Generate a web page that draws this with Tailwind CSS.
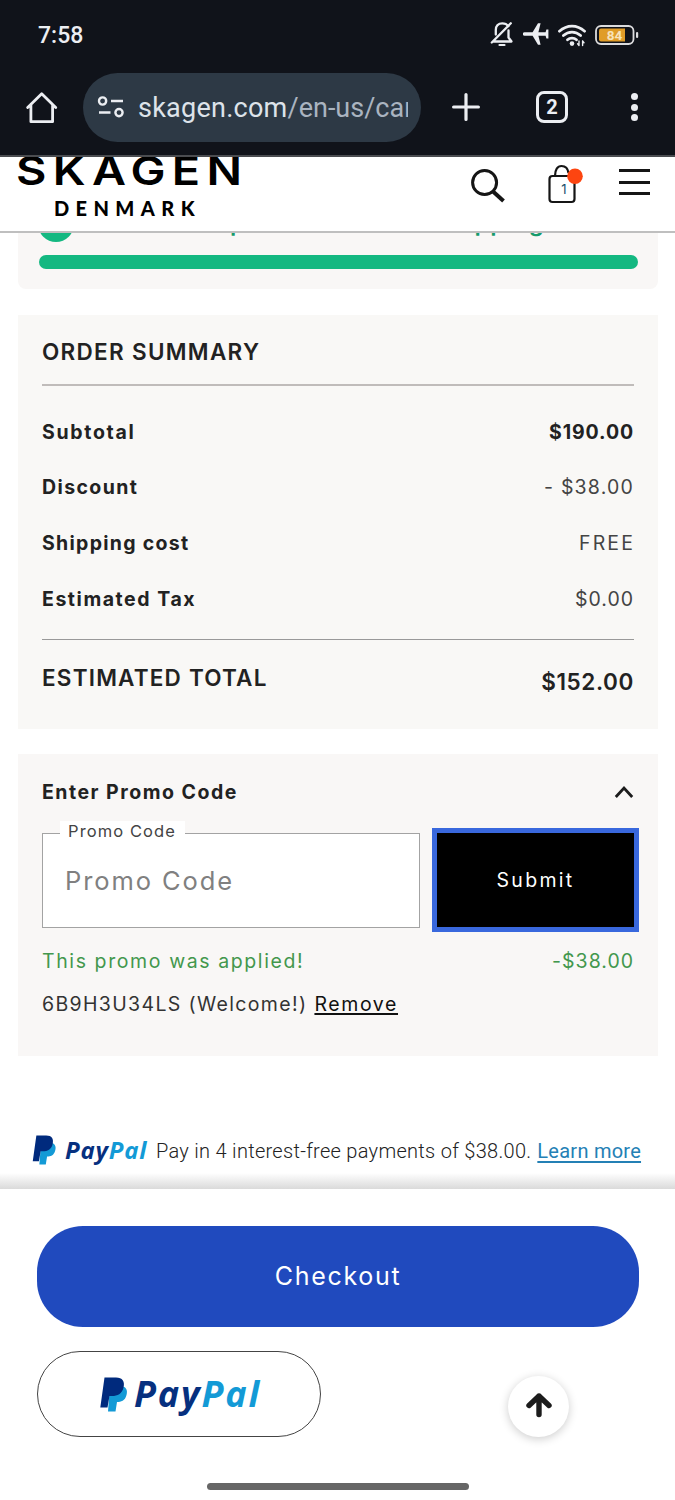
<!DOCTYPE html>
<html lang="en">
<head>
<meta charset="utf-8">
<title>Skagen Cart</title>
<script src="https://cdn.jsdelivr.net/npm/@tailwindcss/browser@4"></script>
</head>
<body class="w-[675px] h-[1500px] overflow-hidden bg-white font-['Inter',sans-serif] text-[#222] flex flex-col whitespace-nowrap">

<!-- Status bar -->
<div class="h-[72px] shrink-0 bg-[#10131a] flex items-center justify-between pl-[38px] pr-[36px] pb-[2px] text-[#eceef2]">
  <span class="font-['Roboto',sans-serif] font-medium text-[23px] leading-none">7:58</span>
  <div class="flex items-center gap-[9px]">
    <svg class="w-[24px] h-[26px] -mt-[2px]" viewBox="0 0 24 26" fill="none" stroke="currentColor" stroke-width="2.300" stroke-linecap="round" stroke-linejoin="round"><path d="M18.500 5.200C17 3.300 15 2.300 12.300 2.300C8.300 2.300 5.800 5 5.800 9V13.500M3.200 20.500H21.500L18.500 16.500V9.500M1.800 21.500L20.800 2.200"/><path d="M9.500 24H14.500" stroke-width="2.200"/></svg>
    <svg class="w-[26px] h-[24px] -mt-[2px]" viewBox="0 0 26 24" fill="currentColor"><path d="M1.500 10.300H9.600L15 1.200H17.600L15.400 10.300H22.600L23.400 7.400H25.400V16.600H23.400L22.600 13.700H15.400L17.600 22.800H15L9.600 13.700H1.500A1.700 1.700 0 0 1 1.500 10.300Z"/></svg>
    <svg class="w-[28px] h-[23px]" viewBox="0 0 28 23" fill="none" stroke="currentColor" stroke-width="2.700" stroke-linecap="round"><path d="M1.400 7.200C9 .3 19 .3 26.600 7.200M5.400 11.600C10.500 6.900 17.500 6.900 22.600 11.600M9.500 15.800C12 13.500 16 13.500 18.500 15.800"/><circle cx="14" cy="19.600" r="2.300" fill="currentColor" stroke="none"/><path d="M21 17V21.500M19.600 19.800L21 21.500M24.600 21.500V17M26 18.700L24.600 17" stroke-width="1.400"/></svg>
    <svg class="w-[44px] h-[20px] -mt-px" viewBox="0 0 44 20"><rect x="1" y="1" width="37.500" height="18" rx="5" fill="none" stroke="#dcdcde" stroke-width="1.800"/><path d="M6 3.500H30V16.500H6Q4 16.500 4 14.500V5.500Q4 3.500 6 3.500Z" fill="#e09c28"/><rect x="41" y="7" width="2.200" height="6" rx="1.100" fill="#dcdcde"/><text x="19.500" y="14.800" text-anchor="middle" font-family="Roboto" font-weight="700" font-size="13.500" fill="#f7e3bc">84</text></svg>
  </div>
</div>

<!-- Browser toolbar -->
<div class="h-[85px] shrink-0 bg-[#10131a] border-b-2 border-[#4a4c50] flex items-start text-[#eceef2]">
  <svg class="w-[32px] h-[32px] ml-[26px] mt-[20px]" viewBox="0 0 32 32" fill="none" stroke="currentColor" stroke-width="2.800" stroke-linejoin="round" stroke-linecap="round"><path d="M1.700 15.500L15.700 1.700L29.700 15.500M4.900 13V29.700H26.600V13"/></svg>
  <div class="ml-[25px] mt-px w-[338px] h-[69px] rounded-full bg-[#2d3945] flex items-center pl-[14px]">
    <svg class="w-[28px] h-[22px] -mt-px" viewBox="0 0 28 22" fill="none" stroke="currentColor" stroke-width="2.400"><circle cx="5.600" cy="5" r="3.600"/><path d="M14 5H26M2 16.500H13.500"/><circle cx="22" cy="16.600" r="3.600"/></svg>
    <div class="ml-[13px] w-[270px] overflow-hidden font-['Roboto',sans-serif] text-[27px] leading-[40px] text-[#dde3ea]"><span class="tracking-[0.25px]">skagen.com</span><span class="text-[#aab4c0]">/en-us/car</span></div>
  </div>
  <svg class="w-[28px] h-[28px] ml-[31px] mt-[21px]" viewBox="0 0 28 28" stroke="currentColor" stroke-width="3.200" stroke-linecap="round"><path d="M14 1.600V26.400M1.600 14H26.400"/></svg>
  <div class="ml-[56px] mt-[19px] w-[32px] h-[32px] rounded-[8px] border-[3px] border-current flex items-center justify-center font-['Roboto',sans-serif] font-bold text-[20px] leading-none">2</div>
  <div class="ml-[63px] mt-[21px] flex flex-col gap-[3.500px]">
    <i class="block w-[7px] h-[7px] rounded-full bg-current"></i><i class="block w-[7px] h-[7px] rounded-full bg-current"></i><i class="block w-[7px] h-[7px] rounded-full bg-current"></i>
  </div>
</div>

<!-- Site header -->
<header class="h-[76px] shrink-0 border-b-2 border-[#bfbfbf] flex items-start overflow-hidden text-black">
  <div class="w-[255px] flex flex-col items-start">
    <span class="ml-[16px] h-[30px] leading-[30px] -mt-px text-[40px] font-semibold tracking-[5.4px] origin-left scale-x-117">SKAGEN</span>
    <span class="ml-[54px] mt-[10px] leading-[24px] text-[20px] tracking-[6.4px] font-black font-['Lato',sans-serif]">DENMARK</span>
  </div>
  <svg class="w-[36px] h-[36px] ml-[215px] mt-[11px]" viewBox="0 0 36 36" fill="none" stroke="#151515"><circle cx="14.600" cy="14.500" r="12" stroke-width="3"/><path d="M22.500 23L33.500 33" stroke-width="4"/></svg>
  <svg class="w-[38px] h-[40px] ml-[41px] mt-[7px]" viewBox="0 0 38 40" fill="none"><rect x="2.500" y="12" width="25" height="26" rx="3" stroke="#151515" stroke-width="2.200"/><path d="M8 12C8 5.500 10.500 2 14.500 2S21 5 21.500 9" stroke="#151515" stroke-width="2.200"/><circle cx="28" cy="12.300" r="7.800" fill="#fd4510"/><text x="16.800" y="29.500" text-anchor="middle" font-family="Inter" font-size="13" fill="#17506c">1</text></svg>
  <div class="ml-[34px] mt-[12px] w-[31px] h-[26px] flex flex-col justify-between">
    <i class="block h-[3px] bg-[#151515]"></i><i class="block h-[3px] bg-[#151515]"></i><i class="block h-[3px] bg-[#151515]"></i>
  </div>
</header>

<!-- Shipping progress -->
<section class="ml-[18px] mr-[17px] h-[56px] shrink-0 bg-[#f9f7f6] rounded-b-[8px] pl-[21px] pr-[20px] overflow-hidden">
  <div class="h-[22px] flex items-start text-[24px] leading-none font-semibold text-[#169b6c]">
    <i class="block w-[36px] h-[36px] -mt-[27px] -ml-px rounded-full bg-[#14b881]"></i>
    <span class="-mt-[22px] ml-[156px]">p</span>
    <span class="-mt-[22px] ml-[193px] tracking-[0.8px]">shipping</span>
  </div>
  <div class="h-[14px] rounded-full bg-[#14b881]"></div>
</section>

<!-- Order summary -->
<section class="ml-[18px] mr-[17px] mt-[26px] h-[414px] shrink-0 bg-[#f9f8f6] px-[24px] text-[19.500px] leading-[24px]">
  <h2 class="h-[71px] pt-[25px] border-b-2 border-[#c0bcba] text-[22.500px] font-semibold tracking-[1.3px]">ORDER SUMMARY</h2>
  <div class="h-[254px] border-b border-[#999] pt-[33.500px] flex flex-col gap-[31.700px]">
    <div class="flex justify-between font-bold"><span class="tracking-[1.7px]">Subtotal</span><span class="tracking-[0.9px]">$190.00</span></div>
    <div class="flex justify-between"><b class="tracking-[1.4px]">Discount</b><span class="tracking-[1.2px] text-[#444]">- $38.00</span></div>
    <div class="flex justify-between"><b class="tracking-[1.3px]">Shipping cost</b><span class="tracking-[2.1px] -mr-px text-[#444]">FREE</span></div>
    <div class="flex justify-between"><b class="tracking-[1.55px]">Estimated Tax</b><span class="tracking-[1px] text-[#444]">$0.00</span></div>
  </div>
  <div class="flex justify-between pt-[26px] text-[22.500px] font-semibold"><span class="tracking-[1.2px]">ESTIMATED TOTAL</span><span class="mt-[4px] tracking-[0.6px]">$152.00</span></div>
</section>

<!-- Promo code -->
<section class="ml-[18px] mr-[17px] mt-[25px] h-[302px] shrink-0 bg-[#f9f7f6] px-[24px] text-[19.500px] leading-[24px]">
  <div class="flex justify-between items-center pt-[26px]">
    <span class="font-bold tracking-[1.5px]">Enter Promo Code</span>
    <svg class="w-[20px] h-[14px]" viewBox="0 0 20 14" fill="none" stroke="#1c1c1c" stroke-width="2.800"><path d="M1.800 12L10 3L18.200 12"/></svg>
  </div>
  <div class="flex mt-[24px]">
    <div class="relative mt-[5px] w-[378px] h-[95px] border border-[#a3a3a3] bg-white flex items-center pl-[22px]">
      <span class="absolute left-[17px] -top-[13px] w-[125px] h-[20px] leading-[20px] bg-white pl-[8px] text-[16.500px] tracking-[1.1px] text-[#444]">Promo Code</span>
      <span class="text-[25.500px] tracking-[1.9px] text-[#808080]">Promo Code</span>
    </div>
    <div class="ml-[12px] -mr-[5px] w-[207px] h-[104px] bg-black border-[5px] border-[#3968dd] flex items-center justify-center text-white tracking-[2.300px]">Submit</div>
  </div>
  <div class="flex justify-between mt-[17px] text-[#43974d]"><span class="tracking-[1.6px]">This promo was applied!</span><span class="tracking-[1px]">-$38.00</span></div>
  <div class="mt-[19px] text-[#333] flex"><span class="tracking-[1.35px]">6B9H3U34LS (Welcome!)</span><span class="ml-[7px] tracking-[1.6px] text-[#111] underline decoration-2 underline-offset-[2px]">Remove</span></div>
</section>

<!-- Pay later message -->
<div class="h-[117px] shrink-0 pt-[78px] pl-[32px] flex items-start">
  <svg class="w-[25px] h-[30px] mt-px" viewBox="0 0 28 35"><path d="M10 9H20C26 9 28 13 26.500 18C25 24 21 25 17 25L15.500 34.500H8Z" fill="#139ad6"/><path d="M4.500 .5H16C22.500 .5 25 4.500 23.500 10.500C22 17 17.500 19 12 19H9.500L7.500 30.500H.3Z" fill="#002a7d"/></svg>
  <span class="w-[80px] ml-[8px] mt-px leading-[30px] text-[24px] font-bold italic font-['Open_Sans',sans-serif] tracking-[0.8px] text-[#06307f]">Pay<span class="text-[#139ad6]">Pal</span></span>
  <span class="ml-[11px] mt-[5px] text-[20px] leading-[24px] font-light font-['Roboto',sans-serif] text-[#222] tracking-[0.29px]">Pay in 4 interest-free payments of $38.00.</span>
  <span class="ml-[6px] mt-[5px] text-[20px] leading-[24px] font-['Roboto',sans-serif] text-[#2480b5] underline underline-offset-[3px] tracking-[0.25px]">Learn more</span>
</div>

<!-- Sticky checkout -->
<div class="h-[16px] shrink-0 bg-linear-to-b from-white to-[#dadada]"></div>
<footer class="flex-1 bg-white pt-[37px] px-[37px] flex flex-col">
  <div class="w-[602px] h-[101px] shrink-0 rounded-[46px] bg-[#204abe] flex items-center justify-center text-white text-[25px] tracking-[1.7px]">Checkout</div>
  <div class="flex mt-[24px]">
    <div class="w-[284px] h-[86px] rounded-[43px] border border-[#444] flex items-start pl-[62px] pt-[25px]">
      <svg class="w-[28px] h-[35px]" viewBox="0 0 28 35"><path d="M10 9H20C26 9 28 13 26.500 18C25 24 21 25 17 25L15.500 34.500H8Z" fill="#139ad6"/><path d="M4.500 .5H16C22.500 .5 25 4.500 23.500 10.500C22 17 17.500 19 12 19H9.500L7.500 30.500H.3Z" fill="#002a7d"/></svg>
      <span class="ml-[6px] -mt-px leading-[36px] text-[36px] font-bold italic font-['Open_Sans',sans-serif] tracking-[1.8px] text-[#06307f]">Pay<span class="text-[#139ad6]">Pal</span></span>
    </div>
    <div class="ml-[187px] mt-[25px] w-[61px] h-[61px] rounded-full bg-white shadow-[0_2px_10px_rgba(0,0,0,0.2)] flex items-center justify-center">
      <svg class="w-[26px] h-[26px] -mt-[3px]" viewBox="0 0 26 26" fill="none" stroke="#1c1c1c" stroke-width="5.400" stroke-linecap="round" stroke-linejoin="round"><path d="M13 22.500V4M3 13.500L13 4L23 13.500"/></svg>
    </div>
  </div>
  <div class="mt-[46px] ml-[170px] w-[262px] h-[7px] rounded-full bg-[#666]"></div>
</footer>
</body>
</html>
